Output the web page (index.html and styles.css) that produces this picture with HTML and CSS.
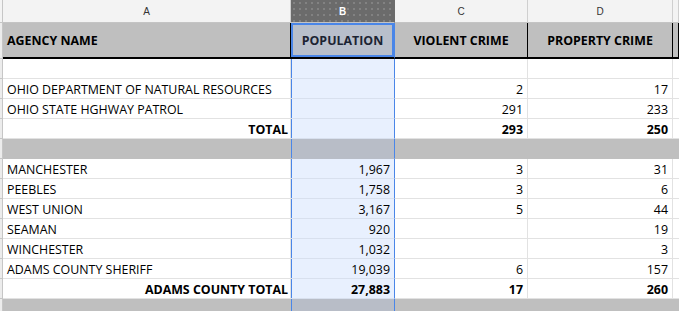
FILE: index.html
```html
<!DOCTYPE html>
<html>
<head>
<meta charset="utf-8">
<link rel="stylesheet" href="styles.css">
</head>
<body>
<div class="sheet">
  <div class="row letters">
    <div class="rh"></div>
    <div class="cl">A</div>
    <div class="cl sel">B</div>
    <div class="cl">C</div>
    <div class="cl">D</div>
    <div class="cl"></div>
  </div>
  <div class="row head">
    <div class="rh"></div>
    <div class="hc left">AGENCY NAME</div>
    <div class="hc selh">POPULATION</div>
    <div class="hc">VIOLENT CRIME</div>
    <div class="hc">PROPERTY CRIME</div>
    <div class="hc"></div>
  </div>
  <div class="row">
    <div class="rh"></div><div class="c"></div><div class="c b"></div><div class="c"></div><div class="c"></div><div class="c"></div>
  </div>
  <div class="row">
    <div class="rh"></div><div class="c">OHIO DEPARTMENT OF NATURAL RESOURCES</div><div class="c b"></div><div class="c n">2</div><div class="c n">17</div><div class="c"></div>
  </div>
  <div class="row">
    <div class="rh"></div><div class="c">OHIO STATE HGHWAY PATROL</div><div class="c b"></div><div class="c n">291</div><div class="c n">233</div><div class="c"></div>
  </div>
  <div class="row bold">
    <div class="rh"></div><div class="c n">TOTAL</div><div class="c b"></div><div class="c n">293</div><div class="c n">250</div><div class="c"></div>
  </div>
  <div class="row gray">
    <div class="rh"></div><div class="c"></div><div class="c b"></div><div class="c"></div><div class="c"></div><div class="c"></div>
  </div>
  <div class="row">
    <div class="rh"></div><div class="c">MANCHESTER</div><div class="c b n">1,967</div><div class="c n">3</div><div class="c n">31</div><div class="c"></div>
  </div>
  <div class="row">
    <div class="rh"></div><div class="c">PEEBLES</div><div class="c b n">1,758</div><div class="c n">3</div><div class="c n">6</div><div class="c"></div>
  </div>
  <div class="row">
    <div class="rh"></div><div class="c">WEST UNION</div><div class="c b n">3,167</div><div class="c n">5</div><div class="c n">44</div><div class="c"></div>
  </div>
  <div class="row">
    <div class="rh"></div><div class="c">SEAMAN</div><div class="c b n">920</div><div class="c n"></div><div class="c n">19</div><div class="c"></div>
  </div>
  <div class="row">
    <div class="rh"></div><div class="c">WINCHESTER</div><div class="c b n">1,032</div><div class="c n"></div><div class="c n">3</div><div class="c"></div>
  </div>
  <div class="row">
    <div class="rh"></div><div class="c">ADAMS COUNTY SHERIFF</div><div class="c b n">19,039</div><div class="c n">6</div><div class="c n">157</div><div class="c"></div>
  </div>
  <div class="row bold">
    <div class="rh"></div><div class="c n">ADAMS COUNTY TOTAL</div><div class="c b n">27,883</div><div class="c n">17</div><div class="c n">260</div><div class="c"></div>
  </div>
  <div class="row gray">
    <div class="rh"></div><div class="c"></div><div class="c b"></div><div class="c"></div><div class="c"></div><div class="c"></div>
  </div>
</div>
</body>
</html>
```

FILE: styles.css
```css
html, body {
  margin: 0;
  padding: 0;
  background: #ffffff;
  overflow: hidden;
}

.sheet {
  width: 679px;
  font-family: "Open Sans", "Noto Sans", sans-serif;
  font-size: 12.4px;
  color: #000;
}

.row {
  display: grid;
  grid-template-columns: 3px 288px 104px 133px 145px 1fr;
  height: 20px;
}

.row > div {
  box-sizing: border-box;
  border-right: 1px solid #e2e2e2;
  border-bottom: 1px solid #e2e2e2;
  white-space: nowrap;
  overflow: hidden;
}

.rh {
  background: #ececec;
  border-right: 1px solid #c6c6c6 !important;
  border-bottom: 1px solid #c6c6c6 !important;
}

/* column letters */
.letters {
  height: 23px;
}
.letters > div {
  background: #f3f3f3;
  border-right: 1px solid #cfcfcf;
  border-bottom: 1px solid #c4c4c4;
}
.cl {
  font-family: "Liberation Sans", Arial, sans-serif;
  font-size: 10px;
  color: #333;
  text-align: center;
  line-height: 23px;
}
.letters > .cl.sel {
  background-color: #6b6b6b;
  background-image: radial-gradient(circle, rgba(255, 255, 255, 0.16) 0.7px, transparent 1px);
  background-size: 6px 6px;
  color: #ffffff;
  font-weight: bold;
  border-right-color: #6b6b6b;
}

/* header row */
.head {
  height: 36px;
}
.head > div {
  background: #bfbfbf;
  border-right: 1px solid #000;
  border-bottom: 2px solid #000;
}
.head > .rh {
  background: #ececec;
}
.hc {
  font-weight: bold;
  text-align: center;
  line-height: 35px;
}
.hc.left {
  text-align: left;
  padding-left: 4px;
}
.head > .selh {
  background: #b8bfcb;
  color: #1c2433;
  box-shadow: inset 0 0 0 2px #4a86e8;
  border-right-color: #4a86e8;
}

/* body cells */
.c {
  line-height: 16px;
  padding: 3px 3px 0 4px;
}
.c.n {
  text-align: right;
  padding-right: 4px;
}
.row > .c.b {
  background: #e8f0fe;
  box-shadow: inset 1px 0 #4a86e8;
  border-right-color: #4a86e8;
  border-bottom-color: #d8e0ee;
}
.bold .c {
  font-weight: bold;
}
.bold .c.n:nth-child(2) {
  padding-right: 2px;
}

.gray > .c {
  background: #bfbfbf;
  border-right-color: #bfbfbf;
  border-bottom-color: #bfbfbf;
}
.gray > .c.b {
  background: #b8bdc7;
  border-bottom-color: #b8bdc7;
}
```
